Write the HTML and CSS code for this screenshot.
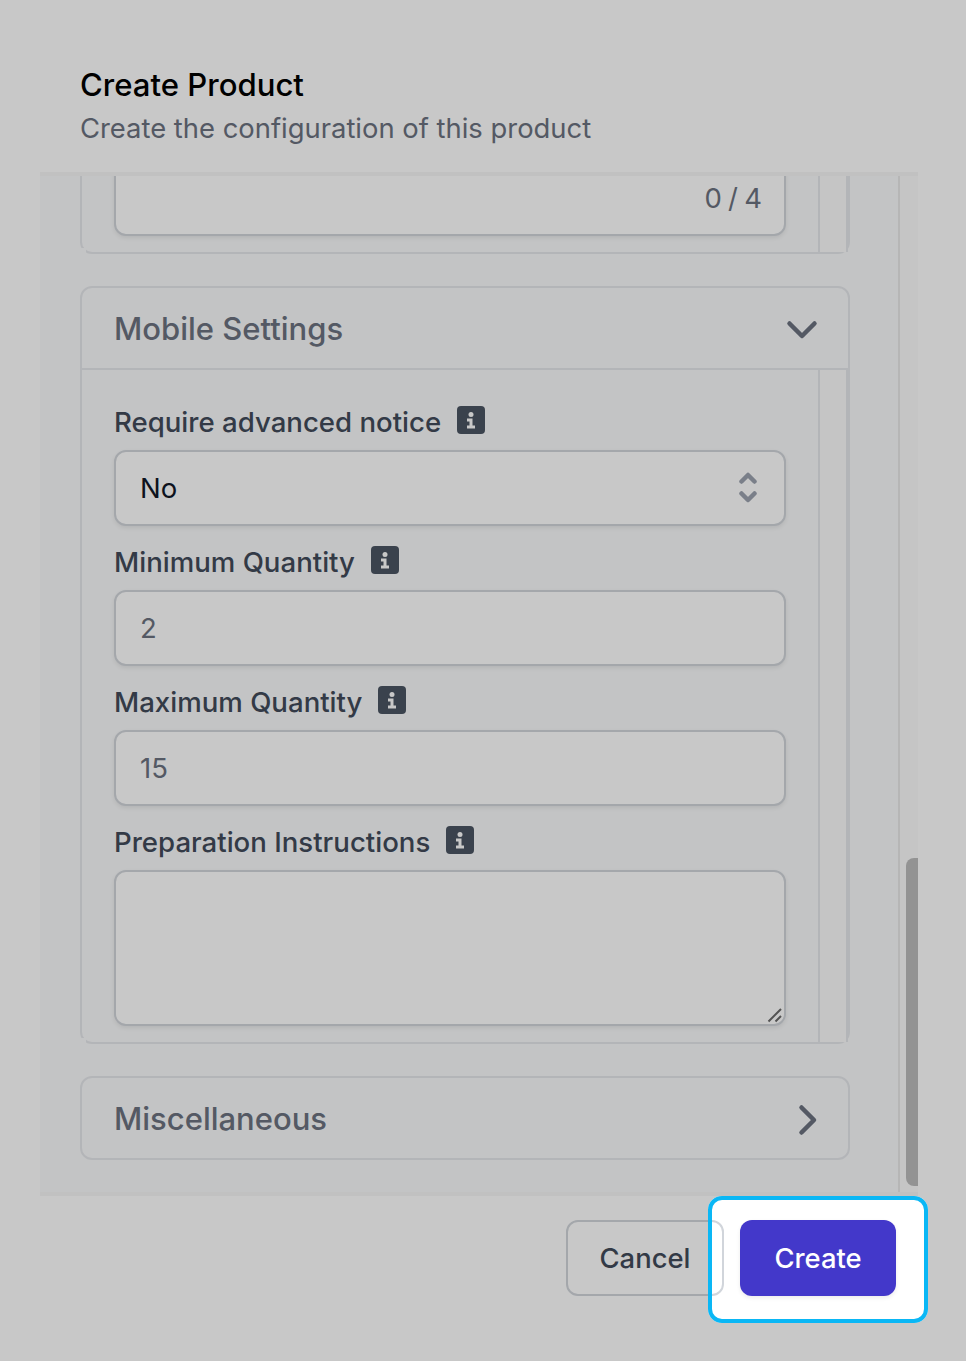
FILE: index.html
```html
<!DOCTYPE html>
<html lang="en">
<head>
<meta charset="utf-8">
<title>Create Product</title>
<link rel="stylesheet" href="styles.css">
</head>
<body>
<div class="modal">
  <header class="modal-head">
    <h1 class="modal-title">Create Product</h1>
    <p class="modal-sub">Create the configuration of this product</p>
  </header>
  <div class="scroll">
    <div class="scroll-content">
      <section class="card card-cut card-open">
        <div class="card-body">
          <div class="card-main">
            <div class="input counter">0 / 4</div>
          </div>
          <div class="card-side"></div>
        </div>
      </section>
      <section class="card card-open">
        <div class="card-head card-head-open">
          <h2 class="card-title">Mobile Settings</h2>
          <svg class="chev chev-down" width="32" height="20" viewBox="0 0 32 20"><path d="M3.500 3.500L16 16 28.500 3.500"/></svg>
        </div>
        <div class="card-body">
          <div class="card-main">
            <div class="field">
              <label class="label">Require advanced notice<svg class="info" viewBox="0 0 28 28"><use href="#i"/></svg></label>
              <div class="input select"><span>No</span>
                <svg class="updown" width="20" height="32" viewBox="0 0 20 32"><path d="M3.500 9.500L10 3l6.500 6.500M3.500 21.500L10 28l6.500-6.500"/></svg>
              </div>
            </div>
            <div class="field">
              <label class="label">Minimum Quantity<svg class="info" viewBox="0 0 28 28"><use href="#i"/></svg></label>
              <div class="input value">2</div>
            </div>
            <div class="field">
              <label class="label">Maximum Quantity<svg class="info" viewBox="0 0 28 28"><use href="#i"/></svg></label>
              <div class="input value">15</div>
            </div>
            <div class="field">
              <label class="label">Preparation Instructions<svg class="info" viewBox="0 0 28 28"><use href="#i"/></svg></label>
              <div class="area-wrap">
                <textarea class="input area"></textarea>
                <svg class="grip" width="16" height="16" viewBox="0 0 16 16"><path d="M1.500 14.500L14 2M8.500 14.500L14 9"/></svg>
              </div>
            </div>
          </div>
          <div class="card-side"></div>
        </div>
      </section>
      <section class="card">
        <div class="card-head">
          <h2 class="card-title">Miscellaneous</h2>
          <svg class="chev chev-right" width="20" height="32" viewBox="0 0 20 32"><path d="M3.500 3.500L16 16 3.500 28.500"/></svg>
        </div>
      </section>
    </div>
    <div class="track"><div class="thumb"></div></div>
  </div>
  <footer class="modal-foot">
    <button class="btn btn-cancel" type="button">Cancel</button>
    <button class="btn btn-create" type="button">Create</button>
  </footer>
</div>
<div class="spotlight"></div>
<svg class="defs" width="0" height="0" aria-hidden="true">
  <symbol id="i" viewBox="0 0 28 28">
    <rect width="28" height="28" rx="4" fill="#4b5563"/>
    <circle cx="14" cy="8.500" r="2.500" fill="#fff"/>
    <path d="M10 12.500h5.500v7H18v3h-8v-3h2.500v-4H10z" fill="#fff"/>
  </symbol>
</svg>
</body>
</html>
```

FILE: styles.css
```css
* { box-sizing: border-box; }
html, body { margin: 0; height: 100%; }
body {
  width: 966px;
  height: 1361px;
  overflow: hidden;
  background: #fff;
  font-family: Inter, "Liberation Sans", sans-serif;
  position: relative;
}
.modal { margin-left: 40px; width: 878px; }
.modal-head { padding: 66px 40px 24px; height: 172px; }
.modal-title { margin: 0; font-size: 31.100px; line-height: 38px; font-weight: 500; color: #000; }
.modal-sub { margin: 4px 0 0; font-size: 27.400px; line-height: 40px; font-weight: 400; color: #6b7280; }

.scroll {
  height: 1024px;
  display: flex;
  background: #f9fafb;
  border-top: 4px solid #f6f6f7;
  border-bottom: 4px solid #f6f6f7;
}
.scroll-content {
  flex: 1;
  min-width: 0;
  overflow: hidden;
  padding: 0 48px 0 40px;
  display: flex;
  flex-direction: column;
  gap: 32px;
}
.track {
  width: 20px;
  flex: none;
  border-left: 2px solid #e8e8e8;
  display: flex;
  justify-content: flex-end;
  align-items: flex-end;
  padding-bottom: 6px;
  background: #fbfbfb;
}
.thumb { width: 12px; height: 328px; background: #bcbcbc; border-radius: 8px 0 0 8px; }

.card { border: 2px solid #e5e7eb; border-radius: 12px; flex: none; position: relative; }
.card-open::after {
  content: "";
  position: absolute;
  left: -2px;
  bottom: -2px;
  width: 6px;
  height: 6px;
  background: #f9fafb;
}
.card-cut { border-top: 0; margin-top: -16px; border-radius: 0 0 12px 12px; }
.card-head {
  height: 80px;
  padding: 0 32px;
  display: flex;
  align-items: center;
  justify-content: space-between;
}
.card-head-open { height: 82px; border-bottom: 2px solid #e5e7eb; }
.card-title { margin: 2px 0 0; font-size: 31px; line-height: 40px; font-weight: 500; color: #6b7280; }
.chev { fill: none; stroke: #6b7280; stroke-width: 4.500; stroke-linecap: round; stroke-linejoin: round; }
.chev-down { margin: 3px -2px 0 0; }
.chev-right { margin: 3px -2px 0 0; }
.card-body { display: flex; }
.card-main { flex: 1; min-width: 0; padding: 32px 32px 16px; display: flex; flex-direction: column; gap: 16px; }
.card-cut .card-main { padding-top: 0; }
.card-side {
  width: 30px;
  flex: none;
  background: #fbfbfb;
  border-left: 2px solid #e5e7eb;
  border-right: 2px solid #e5e7eb;
}

.field { display: flex; flex-direction: column; gap: 8px; }
.label { display: flex; align-items: center; gap: 16px; height: 40px; font-size: 27.600px; font-weight: 500; color: #414b5a; }
.info { width: 28px; height: 28px; flex: none; margin-top: -4px; }

.input {
  height: 76px;
  border: 2px solid #d1d5db;
  border-radius: 12px;
  background: #fff;
  box-shadow: 0 2px 4px rgba(0, 0, 0, .08);
  padding: 0 24px;
  display: flex;
  align-items: center;
  font-size: 27.500px;
  color: #6b7280;
}
.counter { justify-content: flex-end; padding-right: 22px; word-spacing: -1.500px; }
.value { color: #6b7280; }
.select { justify-content: space-between; color: #111827; padding: 0 26px 0 24px; }
.updown { fill: none; stroke: #9ca3af; stroke-width: 4.500; stroke-linecap: round; stroke-linejoin: round; }
.area-wrap { position: relative; }
.area { display: block; width: 100%; height: 156px; resize: none; font-family: inherit; outline: 0; }
.grip {
  position: absolute;
  right: 3px;
  bottom: 3px;
  fill: none;
  stroke: #6a6a6a;
  stroke-width: 2;
}

.modal-foot {
  display: flex;
  justify-content: flex-end;
  gap: 16px;
  padding: 24px 22px 0 0;
}
.btn {
  height: 76px;
  border-radius: 12px;
  font-family: inherit;
  font-size: 27.400px;
  font-weight: 500;
  padding: 0;
}
.btn-cancel { width: 158px; border: 2px solid #d1d5db; background: #fff; color: #414b5a; }
.btn-create { width: 156px; border: 0; background: #4338ca; color: #fff; box-shadow: 0 2px 4px rgba(0, 0, 0, .08); }

.spotlight {
  position: absolute;
  left: 708px;
  top: 1196px;
  width: 220px;
  height: 127px;
  border: 4px solid #0ab7f5;
  border-radius: 14px;
  box-shadow: 0 0 0 2000px rgba(0, 0, 0, .215);
}
.defs { position: absolute; }
```
